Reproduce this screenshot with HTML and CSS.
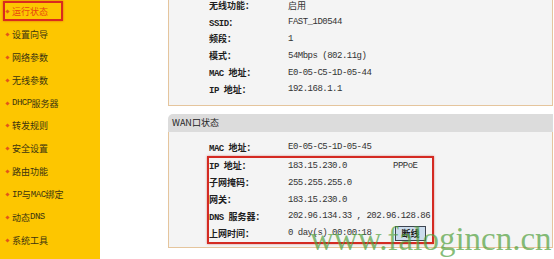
FILE: index.html
```html
<!DOCTYPE html>
<html lang="zh-CN">
<head>
<meta charset="utf-8">
<title>运行状态</title>
<link rel="stylesheet" href="styles.css">
</head>
<body>
<div class="page">
  <nav class="sidebar">
    <ul class="menu">
      <li class="item active"><span class="box"><i class="dot"></i>运行状态</span></li>
      <li class="item"><i class="dot"></i>设置向导</li>
      <li class="item"><i class="dot"></i>网络参数</li>
      <li class="item"><i class="dot"></i>无线参数</li>
      <li class="item"><i class="dot"></i><span class="lat">DHCP</span>服务器</li>
      <li class="item"><i class="dot"></i>转发规则</li>
      <li class="item"><i class="dot"></i>安全设置</li>
      <li class="item"><i class="dot"></i>路由功能</li>
      <li class="item"><i class="dot"></i><span class="lat">IP</span>与<span class="lat">MAC</span>绑定</li>
      <li class="item"><i class="dot"></i>动态<span class="lat">DNS</span></li>
      <li class="item"><i class="dot"></i>系统工具</li>
    </ul>
  </nav>
  <main class="main">
    <section class="panel top-panel">
      <div class="row"><span class="label">无线功能：</span><span class="value">启用</span></div>
      <div class="row"><span class="label"><span class="lat">SSID</span>：</span><span class="value lat">FAST_1D0544</span></div>
      <div class="row"><span class="label">频段：</span><span class="value lat">1</span></div>
      <div class="row"><span class="label">模式：</span><span class="value lat">54Mbps (802.11g)</span></div>
      <div class="row"><span class="label"><span class="lat">MAC </span>地址：</span><span class="value lat">E0-05-C5-1D-05-44</span></div>
      <div class="row"><span class="label"><span class="lat">IP </span>地址：</span><span class="value lat">192.168.1.1</span></div>
    </section>
    <section class="wan">
      <h2 class="wan-head">WAN口状态</h2>
      <div class="panel wan-body">
        <div class="row"><span class="label"><span class="lat">MAC </span>地址：</span><span class="value lat">E0-05-C5-1D-05-45</span></div>
        <div class="highlight">
          <div class="row"><span class="label"><span class="lat">IP </span>地址：</span><span class="value lat narrow">183.15.230.0</span><span class="lat extra">PPPoE</span></div>
          <div class="row"><span class="label">子网掩码：</span><span class="value lat">255.255.255.0</span></div>
          <div class="row"><span class="label">网关：</span><span class="value lat">183.15.230.0</span></div>
          <div class="row"><span class="label"><span class="lat">DNS </span>服务器：</span><span class="value lat">202.96.134.33 , 202.96.128.86</span></div>
          <div class="row"><span class="label">上网时间：</span><span class="value lat wide">0 day(s) 00:00:18</span><button class="btn" type="button">断线</button></div>
        </div>
      </div>
    </section>
  </main>
</div>
<div class="watermark">www.falogincn.cn</div>
</body>
</html>
```
FILE: styles.css
```css
html, body {
  margin: 0;
  padding: 0;
  background: #fff;
  overflow: hidden;
}
body {
  font-family: "Noto Sans CJK SC", sans-serif;
  font-size: 9px;
  color: #2a2a2a;
  width: 554px;
  height: 259px;
  position: relative;
}
.lat {
  font-family: "Liberation Mono", "Noto Sans CJK SC", monospace;
  letter-spacing: -0.5px;
}
.page {
  display: flex;
  height: 259px;
}
.sidebar {
  width: 100px;
  background: #fdc600;
  flex: none;
}
.menu {
  list-style: none;
  margin: 0;
  padding: 0;
}
.item {
  display: flex;
  align-items: center;
  height: 22.9px;
  padding-left: 6px;
  color: #3c3410;
  font-size: 9px;
}
.dot {
  display: inline-block;
  width: 3px;
  height: 3px;
  background: #e2561a;
  transform: rotate(45deg);
  margin-right: 3px;
  flex: none;
}
.item.active {
  padding-left: 3px;
}
.box {
  display: flex;
  align-items: center;
  box-sizing: border-box;
  width: 60px;
  height: 20px;
  border: 2px solid #d92b1f;
  padding-left: 1px;
  color: #e8470e;
  box-shadow: 0 0 2px rgba(200, 40, 20, 0.6);
}
.main {
  margin-left: 68px;
  width: 385px;
  flex: none;
}
.panel {
  border: 1px solid #e5c59d;
  background: #f4f4f4;
}
.top-panel {
  border-top: none;
  margin-top: -3px;
  padding-bottom: 7px;
}
.row {
  display: flex;
  align-items: center;
  height: 16.8px;
  padding-left: 40px;
  white-space: nowrap;
}
.label {
  width: 79px;
  flex: none;
  color: #1e1e1e;
  font-weight: 700;
}
.value {
  color: #333;
}
.narrow { width: 105px; flex: none; }
.wide { width: 107px; flex: none; }
.extra { color: #333; }
.wan {
  margin-top: 8px;
}
.wan-head {
  margin: 0;
  height: 18px;
  line-height: 18px;
  background: #dcdcdc;
  border-top-left-radius: 5px;
  padding-left: 4px;
  font-size: 9px;
  font-weight: normal;
  color: #222;
}
.wan-body {
  border-top: none;
  padding-top: 7px;
  padding-bottom: 3px;
}
.highlight {
  margin-left: 38px;
  width: 227px;
  box-sizing: border-box;
  border: 2px solid #d42a22;
  box-shadow: 0 0 2px rgba(190, 30, 20, 0.5);
}
.highlight .row {
  padding-left: 0;
}
.btn {
  width: 31px;
  height: 15px;
  padding: 0;
  margin: 0;
  border: 1px solid #3d4450;
  background: #cbdcec;
  font-family: "Noto Sans CJK SC", sans-serif;
  font-size: 9px;
  font-weight: 700;
  color: #1c1c1c;
  line-height: 13px;
}
.watermark {
  position: absolute;
  left: 310px;
  top: 223px;
  font-family: "Liberation Serif", serif;
  font-size: 33px;
  line-height: 33px;
  color: rgba(80, 160, 60, 0.7);
  white-space: nowrap;
  pointer-events: none;
}
```
